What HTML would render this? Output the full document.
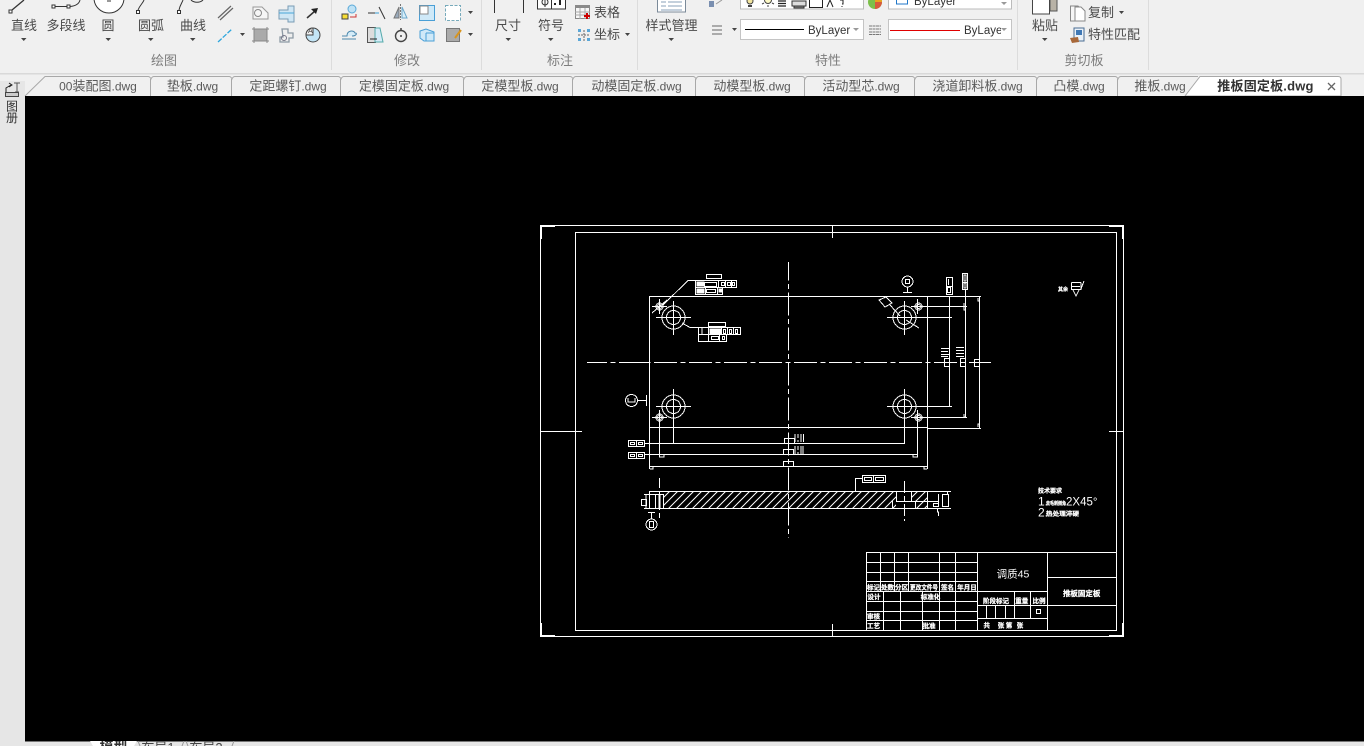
<!DOCTYPE html>
<html><head><meta charset="utf-8"><title>CAD</title>
<style>
html,body{margin:0;padding:0;width:1364px;height:746px;overflow:hidden;background:#f0f0f0}
svg{display:block}
text{font-family:"Liberation Sans","Noto Sans CJK SC",sans-serif}
.rb{font-size:13px;fill:#4a4a4a;text-anchor:middle}
.rl{font-size:13px;fill:#4a4a4a}
.pt{font-size:13px;fill:#7d7d7d;text-anchor:middle}
.tb{font-size:13px;fill:#5a5a5a;text-anchor:middle}
.l{font-size:12px}
.by{font-size:11.5px;fill:#333}
.cad{fill:none;stroke:#fff;stroke-width:1;shape-rendering:crispEdges}
.ct{fill:#fff;font-size:6.5px;font-weight:bold;text-anchor:middle;stroke:#fff;stroke-width:.25}
</style></head><body>
<svg width="1364" height="746" viewBox="0 0 1364 746" xmlns="http://www.w3.org/2000/svg">
<defs>
<pattern id="h" width="8" height="8" patternUnits="userSpaceOnUse" patternTransform="translate(1 0)">
<path d="M-1 9L9 -1M-1 1L1 -1M7 9L9 7" stroke="#fff" stroke-width="1" fill="none"/>
</pattern>
<clipPath id="c1"><rect x="889" y="19" width="112" height="22"/></clipPath>
<clipPath id="c2"><rect x="0" y="741" width="1364" height="5"/></clipPath>
</defs>
<rect width="1364" height="746" fill="#f0f0f0"/>
<rect x="0" y="73" width="1364" height="1.5" fill="#d9d9d9"/>

<!-- panel separators -->
<g stroke="#dcdcdc"><path d="M331.500 0V70M481.500 0V70M637.500 0V70M1017.500 0V70M1148.500 0V70"/></g>

<!-- draw panel -->
<g fill="none" stroke="#333">
<path d="M12 10L24 0" stroke-width="1.3"/><rect x="9" y="10" width="3" height="3" fill="#fff"/>
<path d="M55 6.500H67"/><rect x="52" y="5" width="3" height="3" fill="#fff"/><rect x="67" y="5" width="3" height="3" fill="#fff"/><path d="M70 6.500C76 6 79 4 80 0"/>
<circle cx="109" cy="-2" r="15" fill="#fff"/><path d="M107 1H111"/>
<path d="M138 10C140 5 143 3 144 0"/><rect x="136.500" y="10.500" width="3" height="3" fill="#fff"/>
<path d="M179 10C180 5 182 3 183 0M191 0C194 3 200 3 203 0"/><rect x="177.500" y="10.500" width="3" height="3" fill="#fff"/>
</g>
<path d="M218 18L231 6M220 20L233 8" stroke="#666" stroke-width="1.200" fill="none"/>
<path d="M218 42L232 29" stroke="#2da6dd" stroke-width="1.300" stroke-dasharray="5 1.500"/>
<path d="M240 33H245L242.500 36Z" fill="#444"/>
<path d="M253 7H262L268 13V19H253Z" fill="#f6f6f6" stroke="#999"/><circle cx="258" cy="13" r="3.500" fill="none" stroke="#888"/>
<path d="M279 10H288V6H294V22H288V19H279Z" fill="#cfe6f4" stroke="#7a9cb5"/><path d="M279 13H294" stroke="#4aa6d8"/>
<path d="M307 18L315 11" stroke="#333" stroke-width="1.500"/><path d="M311 9L318 8L316 14Z" fill="#222"/>
<rect x="254" y="29" width="13" height="12" fill="#aaa" stroke="#777"/><path d="M252 29H269M252 41H269M254 27V43M267 27V43" stroke="#888"/>
<path d="M282 29H288V33H293V38H289V42H280V37H283Z" fill="#eee" stroke="#8d9aa5" stroke-width="1.300"/><circle cx="284" cy="38" r="2.500" fill="none" stroke="#778"/>
<circle cx="313" cy="35" r="7" fill="#c3e5f6" stroke="#444"/><path d="M313 28V35H306C306 31 309 28 313 28Z" fill="#f0f0f0" stroke="#444"/>
<text x="308" y="33" font-size="7" fill="#444">A</text>

<!-- modify -->
<circle cx="352" cy="9" r="4" fill="#bfe2f5" stroke="#5aa9d8"/><rect x="342" y="14" width="6" height="5" fill="#f6dd35" stroke="#444"/><path d="M350 17H356V14" stroke="#c33" fill="none"/>
<path d="M368 13H375M379 7L385 19" stroke="#333" fill="none"/><path d="M375 13H379" stroke="#3a9ed5"/>
<path d="M399 7L394 18H399Z" fill="#9ab" stroke="#777"/><path d="M402 7L407 18H402Z" fill="#d8eef9" stroke="#6ba8cc"/><path d="M400.500 4V20" stroke="#777" stroke-dasharray="2 1"/>
<rect x="419.500" y="5.500" width="15" height="15" fill="#cfe9f8" stroke="#4a9fd6"/><rect x="420" y="6" width="8" height="8" fill="#fff" stroke="#888"/>
<rect x="445.500" y="5.500" width="15" height="15" fill="#fff" stroke="#7ab" stroke-dasharray="3 1.500"/>
<path d="M468 11H473L470.500 14Z" fill="#444"/>
<path d="M342 39H356M342 36H347C347 30 354 30 355 33C358 33 356 36 352 36" fill="#d5ecf8" stroke="#4c88ad"/>
<rect x="367.500" y="27.500" width="8" height="15" fill="#ddd" stroke="#555"/><path d="M375 28H380L383 42H375Z" fill="#d5ecf8" stroke="#5aa"/><path d="M370 39H377" stroke="#222"/>
<circle cx="401" cy="36" r="5.500" fill="none" stroke="#444" stroke-width="1.400"/><path d="M401 28V31" stroke="#444" stroke-width="1.500"/><circle cx="401" cy="36" r="1" fill="#444"/>
<path d="M420 31L426 29L434 32V41H424L420 38Z" fill="#cfe9f8" stroke="#4a9fd6"/><path d="M426 33H434M426 33V41" stroke="#4a9fd6"/>
<rect x="446.500" y="28.500" width="13" height="13" fill="#aaa" stroke="#777"/><path d="M455 38L461 30" stroke="#d8941e" stroke-width="2"/>
<path d="M468 33H473L470.500 36Z" fill="#444"/>

<!-- annotation -->
<path d="M494.500 0V13M523.500 0V13" stroke="#333"/>
<rect x="537.500" y="-2" width="28" height="11" fill="#fff" stroke="#333"/><path d="M551.500 0V9" stroke="#333"/><circle cx="545" cy="2" r="3" fill="none" stroke="#333"/><path d="M545 -2V7" stroke="#333"/><rect x="554" y="3" width="2" height="2" fill="#222"/><rect x="559" y="0" width="2" height="5" fill="#222"/>
<rect x="575.500" y="5.500" width="14" height="13" fill="#f7f7f7" stroke="#888"/><rect x="575" y="5" width="15" height="3" fill="#8a8a8a"/><path d="M575 12H590M575 15H590M580 8V19M585 8V19" stroke="#aaa"/><path d="M584 16H590M587 13V19" stroke="#c00" stroke-width="2"/>
<text x="594" y="17" class="rl">表格</text>
<rect x="578" y="29" width="3" height="3" fill="#5aa7d8"/><rect x="587" y="29" width="3" height="3" fill="#5aa7d8"/><rect x="578" y="38" width="3" height="3" fill="#5aa7d8"/><rect x="587" y="38" width="3" height="3" fill="#5aa7d8"/>
<path d="M584 30V42M578 35H590" stroke="#666" stroke-dasharray="2 1"/>
<text x="594" y="39" class="rl">坐标</text>
<path d="M625 33H630L627.500 36Z" fill="#444"/>
<rect x="657.500" y="-3" width="28" height="15" fill="#fff" stroke="#7b8a99"/><path d="M661 2H666M661 6H666M668 2H682M668 6H682M661 10H682" stroke="#8aa0b8"/>

<!-- properties -->
<path d="M709 1H714V7H709Z" fill="#7a8fb0"/><path d="M716 4L722 0" stroke="#999" fill="none"/>
<rect x="740.500" y="-3" width="123" height="12" fill="#fff" stroke="#bbb"/>
<circle cx="750" cy="1" r="3" fill="#f3e6a0" stroke="#444"/><path d="M748 5H752V7H748Z" fill="#444"/>
<circle cx="768" cy="0" r="3.500" fill="#fdf9c5" stroke="#444"/><path d="M762 4L764 3M774 4L772 3M768 5V7" stroke="#444"/>
<path d="M778 1H786M778 3.500H786M778 6H786" stroke="#222" stroke-width="1.200"/>
<path d="M792 1H806V6H792Z" fill="#ddd" stroke="#333"/><path d="M794 6H804V8H794Z" fill="#888" stroke="#333"/>
<rect x="809.500" y="-3" width="13" height="10.500" fill="#fff" stroke="#222"/>
<path d="M827 7L830 0M833 7L830 0" stroke="#222" fill="none"/><path d="M840 0H843V4H842M842 6V7" stroke="#222" fill="none"/>
<circle cx="875" cy="2" r="7" fill="#7cc04a"/><path d="M875 2L875 -5A7 7 0 0 1 882 2Z" fill="#e9a31e"/><path d="M875 2L882 2A7 7 0 0 1 875 9Z" fill="#d75a3d"/>
<rect x="888.500" y="-3" width="123" height="12" fill="#fff" stroke="#bbb"/>
<rect x="896.500" y="-3" width="11" height="7" fill="#fff" stroke="#2077c8"/>
<text x="914" y="5" class="by">ByLayer</text>
<path d="M1001 2H1007L1004 5Z" fill="#999"/>
<path d="M712 26H722M712 30H722M712 34H722" stroke="#666"/>
<path d="M732 28H737L734.500 31Z" fill="#444"/>
<rect x="740.500" y="19.500" width="123" height="20" fill="#fff" stroke="#c4c4c4"/>
<path d="M745 29.500H804" stroke="#000"/>
<text x="808" y="34" class="by">ByLayer</text>
<path d="M853 28H859L856 31Z" fill="#999"/>
<path d="M869 26H881M869 29H881M869 32H881M869 34.500H881" stroke="#777" stroke-dasharray="3 .5"/>
<rect x="888.500" y="19.500" width="123" height="20" fill="#fff" stroke="#c4c4c4"/>
<path d="M890 30.500H960" stroke="#e00000"/>
<g clip-path="url(#c1)"><text x="964" y="34" class="by">ByLayer</text></g>
<path d="M1001 28H1007L1004 31Z" fill="#999"/>

<!-- clipboard -->
<rect x="1050" y="-2" width="7" height="13" fill="#b8b2a6" stroke="#555"/>
<rect x="1032.500" y="-3" width="17" height="17" fill="#fff" stroke="#444"/>
<path d="M1070.500 6H1078L1082 10V21H1070.500Z" fill="#f6f6f6" stroke="#888"/><path d="M1075 10H1081L1085 14V24H1075Z" fill="#fff" stroke="#888" transform="translate(0 -3)"/>
<text x="1088" y="17" class="rl">复制</text>
<path d="M1119 11H1124L1121.500 14Z" fill="#444"/>
<rect x="1074" y="28" width="10" height="13" fill="#eaf1f8" stroke="#4a6d92"/><rect x="1076" y="30" width="6" height="5" fill="#3f78b5"/>
<path d="M1070 38L1078 37L1079 42L1072 43Z" fill="#a8683a"/>
<text x="1088" y="39" class="rl">特性匹配</text>

<!-- ribbon labels -->
<g class="rb">
<text x="24" y="30" class="rb">直线</text><text x="66" y="30" class="rb">多段线</text><text x="108" y="30" class="rb">圆</text><text x="151" y="30" class="rb">圆弧</text><text x="193" y="30" class="rb">曲线</text>
<text x="508" y="30" class="rb">尺寸</text><text x="551" y="30" class="rb">符号</text><text x="671.500" y="30" class="rb">样式管理</text><text x="1045" y="30" class="rb">粘贴</text>
</g>
<g fill="#444">
<path d="M21 38H26.500L23.750 41Z"/><path d="M105.500 38H111L108.250 41Z"/><path d="M148 38H153.500L150.750 41Z"/><path d="M190 38H195.500L192.750 41Z"/>
<path d="M505.500 38H511L508.250 41Z"/><path d="M548 38H553.500L550.750 41Z"/><path d="M668.500 38H674L671.250 41Z"/><path d="M1042 38H1047.500L1044.750 41Z"/>
</g>
<text x="164" y="65" class="pt">绘图</text><text x="407" y="65" class="pt">修改</text><text x="560" y="65" class="pt">标注</text><text x="828" y="65" class="pt">特性</text><text x="1084" y="65" class="pt">剪切板</text>

<!-- left bar -->
<rect x="0" y="81" width="25" height="665" fill="#e6e6e6"/>
<path d="M6 92V88L11 85M9 83L12 85L9 87" stroke="#222" fill="none"/><path d="M14 83H20M17 83V92M15 92H19" stroke="#555" fill="none"/>
<rect x="5.500" y="92.500" width="13" height="4" fill="#ccc" stroke="#444"/>
<text x="12" y="110.500" font-size="12" fill="#333" text-anchor="middle">图</text>
<text x="12" y="122" font-size="12" fill="#333" text-anchor="middle">册</text>

<!-- tabs -->
<path d="M25 96L45 76H1340Q1341 76 1341 78V96Z" fill="#f0f0f0"/>
<path d="M25 96L45 76.500H148Q150 76.500 151 79Q152 76.500 154 76.500H229Q231 76.500 232 79Q233 76.500 235 76.500H338Q340 76.500 341 79Q342 76.500 344 76.500H461Q463 76.500 464 79Q465 76.500 467 76.500H570Q572 76.500 573 79Q574 76.500 576 76.500H693Q695 76.500 696 79Q697 76.500 699 76.500H802Q804 76.500 805 79Q806 76.500 808 76.500H912Q914 76.500 915 79Q916 76.500 918 76.500H1034Q1036 76.500 1037 79Q1038 76.500 1040 76.500H1115Q1117 76.500 1118 79Q1119 76.500 1121 76.500H1198" fill="none" stroke="#a8a8a8"/>
<path d="M151 79V96M232 79V96M341 79V96M464 79V96M573 79V96M696 79V96M805 79V96M915 79V96M1037 79V96M1118 79V96" stroke="#a8a8a8" fill="none" transform="translate(-.5 0)"/>
<path d="M1185 96L1200 76.500H1338Q1341 76.500 1341 79V96Z" fill="#fff" stroke="#a8a8a8"/>
<g>
<text x="98" y="90.500" class="tb"><tspan class="l">00</tspan>装配图<tspan class="l">.dwg</tspan></text><text x="192.500" y="90.500" class="tb">垫板<tspan class="l">.dwg</tspan></text><text x="288" y="90.500" class="tb">定距螺钉<tspan class="l">.dwg</tspan></text><text x="404" y="90.500" class="tb">定模固定板<tspan class="l">.dwg</tspan></text><text x="520" y="90.500" class="tb">定模型板<tspan class="l">.dwg</tspan></text><text x="636.500" y="90.500" class="tb">动模固定板<tspan class="l">.dwg</tspan></text><text x="752" y="90.500" class="tb">动模型板<tspan class="l">.dwg</tspan></text><text x="861" y="90.500" class="tb">活动型芯<tspan class="l">.dwg</tspan></text><text x="977.500" y="90.500" class="tb">浇道卸料板<tspan class="l">.dwg</tspan></text><text x="1079" y="90.500" class="tb">凸模<tspan class="l">.dwg</tspan></text><text x="1160" y="90.500" class="tb">推板<tspan class="l">.dwg</tspan></text>
<text x="1265.500" y="90.500" class="tb" style="fill:#333;font-weight:bold;letter-spacing:.2px">推板固定板.dwg</text>
</g>
<path d="M1328 83L1335 90M1335 83L1328 90" stroke="#666" stroke-width="1.300"/>

<!-- canvas -->
<rect x="25" y="96" width="1339" height="645" fill="#000"/>
<rect x="25" y="741" width="1339" height="5" fill="#e6e6e6"/>
<path d="M25 741.500H1364" stroke="#777"/>
<g clip-path="url(#c2)">
<path d="M90 741L93 746H134L137 741Z" fill="#fff"/>
<path d="M138 741L140 746M184 741L182 746M186 741L188 746M234 741L232 746" stroke="#999"/>
<text x="113.500" y="752" font-size="14" font-weight="bold" fill="#333" text-anchor="middle">模型</text>
<text x="158" y="752" font-size="13" fill="#444" text-anchor="middle">布局1</text>
<text x="206" y="752" font-size="13" fill="#444" text-anchor="middle">布局2</text>
</g>

<!-- CAD drawing -->
<g fill="#fff" shape-rendering="crispEdges">
<rect x="540" y="225" width="15" height="2"/><rect x="540" y="225" width="2" height="14"/>
<rect x="1109" y="225" width="15" height="2"/><rect x="1122" y="225" width="2" height="14"/>
<rect x="540" y="635" width="15" height="2"/><rect x="540" y="623" width="2" height="14"/>
<rect x="1109" y="635" width="15" height="2"/><rect x="1122" y="623" width="2" height="14"/>
</g>
<g class="cad">
<rect x="540.500" y="225.500" width="583" height="411"/>
<rect x="575.500" y="232.500" width="541" height="398"/>
<path d="M832.500 226V238M832.500 624V636M541 431.500H582M1109 431.500H1123"/>

<!-- plate -->
<path d="M649.500 296.500H981M649.500 296V469M649.500 427.500H927M927.500 296V469"/>
<path d="M649 443.500H904.500V420M649 454.500H917.500M649 466.500H927M673.500 420V444M659.500 425V457M917.500 425V457M650 469H653V467M924 467V469H927M913 454V457H918M659 457H664V454"/>
<path d="M918 306.500H967M904 317.500H952M904 406.500H952M918 417.500H967M927 428.500H981M949.500 296V406M965.500 290V417M979.500 296V428"/>
<path d="M978 298V301H980M964 303V310H966M964 414V417H966M978 427V424H980"/>

<!-- center lines -->
<path d="M788.500 262V538" stroke-dasharray="23 3.500 5 3.500" stroke-dashoffset="4.700"/>
<path d="M587 362.500H991" stroke-dasharray="23 3.500 5 3.500" stroke-dashoffset="3"/>
<path d="M620 362.500H649"/>

<!-- holes -->
<circle cx="673.500" cy="317.500" r="11.500"/><circle cx="673.500" cy="317.500" r="7"/><path d="M656 317.500H691M673.500 301V335"/>
<circle cx="673.500" cy="406.500" r="11.500"/><circle cx="673.500" cy="406.500" r="7"/><path d="M656 406.500H691M673.500 389V420"/>
<circle cx="904.500" cy="317.500" r="11.500"/><circle cx="904.500" cy="317.500" r="7"/><path d="M887 317.500H922M904.500 301V335"/>
<circle cx="904.500" cy="406.500" r="11.500"/><circle cx="904.500" cy="406.500" r="7"/><path d="M887 406.500H922M904.500 389V420"/>
<circle cx="659.500" cy="306.500" r="3.500"/><circle cx="659.500" cy="306.500" r="2"/><path d="M652 306.500H667M659.500 299V314M652 313L667 300"/>
<circle cx="659.500" cy="417.500" r="3.500"/><circle cx="659.500" cy="417.500" r="2"/><path d="M652 417.500H667M659.500 410V425"/>
<circle cx="918.500" cy="306.500" r="3.500"/><circle cx="918.500" cy="306.500" r="2"/><path d="M911 306.500H926M917.500 299V314"/>
<circle cx="918.500" cy="417.500" r="3.500"/><circle cx="918.500" cy="417.500" r="2"/><path d="M911 417.500H926M917.500 410V425"/>

<!-- frames top-left -->
<path d="M695 280.500H688L663 305"/>
<rect x="706.500" y="274.500" width="15" height="4"/>
<rect x="695.500" y="280.500" width="23" height="7"/><rect x="718.500" y="280.500" width="18" height="7"/>
<rect x="695.500" y="287.500" width="27" height="7"/>
<rect x="697" y="282" width="7" height="4" fill="#fff"/><rect x="704.500" y="282.500" width="12" height="4"/><rect x="721.500" y="282.500" width="3" height="3"/><rect x="727.500" y="282.500" width="3" height="3"/><rect x="732.500" y="282.500" width="2" height="3"/><path d="M725.500 281V287M731.500 281V287"/>
<rect x="697" y="289" width="7" height="4" fill="#fff"/><rect x="706.500" y="289.500" width="9" height="3"/><path d="M705.500 288V294M717.500 288V294"/><rect x="719" y="289" width="3" height="3" fill="#fff"/>

<!-- frames 2 -->
<path d="M698 327.500H690L682 323"/>
<rect x="708.500" y="322.500" width="17" height="4"/>
<rect x="698.500" y="327.500" width="42" height="7"/><rect x="698.500" y="334.500" width="28" height="7"/>
<path d="M708.500 328V334M702 328V334M721.500 328V334M727.500 328V334M733.500 328V334M708.500 335V341M719.500 335V341"/>
<rect x="710" y="329" width="11" height="5" fill="#fff"/>
<rect x="723.500" y="329.500" width="2" height="4"/><rect x="729.500" y="329.500" width="2" height="4"/><rect x="735.500" y="329.500" width="2" height="4"/>
<rect x="711.500" y="336.500" width="7" height="3"/><rect x="722.500" y="336.500" width="2" height="3"/>

<!-- balloons -->
<circle cx="631.500" cy="400.500" r="6"/><path d="M628 398V402H635V398M638 400.500H646M646.500 395V406"/>
<circle cx="651.500" cy="524.500" r="5.500"/><rect x="649.500" y="521.500" width="4" height="6"/><path d="M651.500 512V519M648 512.500H655"/>
<circle cx="907.500" cy="281.500" r="5.500"/><rect x="905.500" y="279.500" width="4" height="4"/><path d="M907.500 287V292M903 292.500H912"/>

<!-- left dim boxes -->
<rect x="628.500" y="440.500" width="16" height="6"/><path d="M636.500 441V446"/><rect x="630.500" y="442.500" width="4" height="2"/><rect x="638.500" y="442.500" width="4" height="2"/><path d="M645 443.500H650"/>
<rect x="628.500" y="452.500" width="16" height="6"/><path d="M636.500 453V458"/><rect x="630.500" y="454.500" width="4" height="2"/><rect x="638.500" y="454.500" width="4" height="2"/><path d="M645 454.500H650"/>

<!-- center dim boxes -->
<rect x="784.500" y="438.500" width="10" height="5"/><rect x="783.500" y="449.500" width="10" height="5"/><rect x="783.500" y="461.500" width="10" height="5"/>
<path d="M795 434V442M798 434V438M798 440V442M801 434V442M803.500 434V442M795 446V454M798 446V450M798 452V454M801 446V454M803 446V454"/>

<!-- right dim stuff -->
<rect x="946.500" y="277.500" width="6" height="17"/><path d="M947 286.500H952M948.500 279V285"/><rect x="947.500" y="287.500" width="3" height="5"/>
<rect x="962.500" y="273.500" width="5" height="16"/><rect x="964" y="275" width="2" height="6"/><rect x="964" y="283" width="2" height="5"/><path d="M963 282.500H967"/>
<rect x="944.500" y="358.500" width="5" height="8"/><rect x="960.500" y="358.500" width="5" height="8"/><rect x="974.500" y="359.500" width="5" height="7"/>
<path d="M941 348.500H949M941 351.500H948M941 354.500H949M941 356.500H948M956 347.500H964M956 350.500H964M956 353.500H964M956 356.500H964"/>

<!-- oblique frame -->
<path d="M879 300L886 297L892 303L885 307ZM890 305L900 316M906 320L919 328"/>

<!-- section view -->
<rect x="664" y="491" width="232" height="17" fill="url(#h)" stroke="none"/>
<rect x="912" y="491" width="15" height="10" fill="url(#h)" stroke="none"/>
<rect x="916" y="501" width="11" height="7" fill="url(#h)" stroke="none"/>
<path d="M649 491.500H951M644 508.500H951M644 494.500H664M649.500 491V508M655.500 494V508M659 494V508M660 494V508M663.500 494V508"/>
<rect x="641.500" y="499.500" width="5" height="6"/>
<path d="M646 494V508M896.500 491V501M911.500 491V501M927.500 491V508M947.500 491V494M896 501.500H938M892.500 501V508M915.500 501V508M938.500 494V503M937.500 508V512H938.500V516"/>
<rect x="942.500" y="494.500" width="6" height="12"/><rect x="933.500" y="503.500" width="5" height="3"/>
<path d="M904.500 481V521" stroke-dasharray="12 3 5 3" stroke="#fff"/>
<path d="M659.500 478V518" stroke-dasharray="10 3 6 3"/>
<path d="M862 478.500H855.500V491"/>
<rect x="862.500" y="475.500" width="23" height="7"/><path d="M873.500 476V482"/><rect x="864.500" y="477.500" width="7" height="3"/><rect x="875.500" y="477.500" width="8" height="3"/>

<!-- surface finish -->
<path d="M1071.500 282.500H1081M1072 286.500H1080M1071.500 282.500V289.500H1081V282.500M1073 290L1076 296L1079 290M1081 289L1084 281"/>

<!-- title block -->
<path d="M866.500 552V631M866 552.500H1116M866 562.500H978M866 572.500H978M866 581.500H978M866 591.500H1048M866 601.500H978M866 611.500H978M866 620.500H978"/>
<path d="M880.500 552V591M894.500 552V591M908.500 552V591M939.500 552V631M955.500 552V631M883.500 591V631M900.500 591V631M922.500 591V631M977.500 552V631M1047.500 552V631"/>
<path d="M1047 577.500H1116M978 605.500H1116M978 618.500H1048M1014.500 591V618M1030.500 591V618M986.500 605V618M995.500 605V618M1005.500 605V618"/>
<rect x="1036.500" y="609.500" width="4" height="4"/>
</g>

<!-- CAD text -->
<g>
<text class="ct" x="873.500" y="589.500">标记</text><text class="ct" x="887.500" y="589.500">处数</text><text class="ct" x="901.500" y="589.500">分区</text><text class="ct" x="924" y="589.500" textLength="28" lengthAdjust="spacingAndGlyphs">更改文件号</text><text class="ct" x="947.500" y="589.500">签名</text><text class="ct" x="967" y="589.500">年月日</text>
<text class="ct" x="874" y="599">设计</text><text class="ct" x="930.500" y="599">标准化</text><text class="ct" x="873.500" y="618.500">审核</text><text class="ct" x="873.500" y="628">工艺</text><text class="ct" x="929" y="628">批准</text>
<text class="ct" x="996" y="603">阶段标记</text><text class="ct" x="1021.700" y="603">重量</text><text class="ct" x="1039" y="603">比例</text>
<text class="ct" x="986.700" y="627.500">共</text><text class="ct" x="1001" y="627.500">张</text><text class="ct" x="1009" y="627.500">第</text><text class="ct" x="1020" y="627.500">张</text>
<text x="1013" y="577.500" fill="#fff" font-size="10.500" text-anchor="middle">调质45</text>
<text x="1081.700" y="596" class="ct" style="font-size:7.500px">推板固定板</text>
<text x="1050" y="493" class="ct" style="font-size:6px">技术要求</text>
<text x="1038" y="505.500" fill="#fff" font-size="12">1.</text><text x="1046" y="505" class="ct" style="text-anchor:start;font-size:5px" textLength="20" lengthAdjust="spacingAndGlyphs">去毛刺倒角</text><text x="1066" y="505.500" fill="#fff" font-size="11.500">2X45°</text>
<text x="1038" y="516.500" fill="#fff" font-size="12">2.</text><text x="1046" y="516" class="ct" style="text-anchor:start;font-size:6px" textLength="33" lengthAdjust="spacingAndGlyphs">热处理淬硬</text>
<text x="1063" y="291" class="ct" style="font-size:5px">其余</text>
</g>
</svg>
</body></html>
